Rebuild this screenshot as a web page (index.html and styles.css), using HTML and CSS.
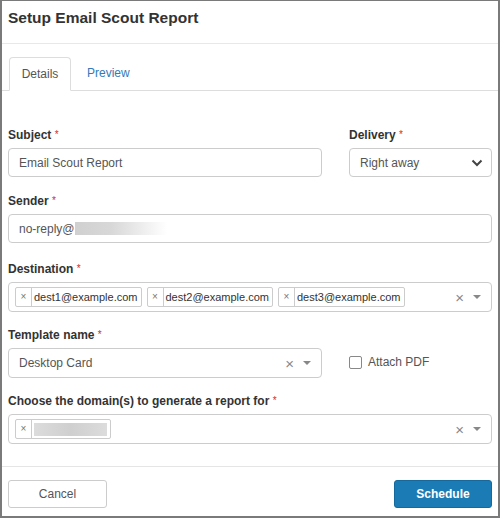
FILE: index.html
```html
<!DOCTYPE html>
<html>
<head>
<meta charset="utf-8">
<link rel="stylesheet" href="styles.css">
</head>
<body>
<div class="modal">
  <div class="header"><h1 class="title">Setup Email Scout Report</h1></div>
  <div class="tabs">
    <div class="tab active">Details</div>
    <div class="tab link">Preview</div>
  </div>
  <div class="form">
    <div class="row two">
      <div class="group">
        <label class="label">Subject <span class="req">*</span></label>
        <div class="input">Email Scout Report</div>
      </div>
      <div class="group">
        <label class="label">Delivery <span class="req">*</span></label>
        <div class="input select">
          <span>Right away</span>
          <svg class="chev" width="12" height="8" viewBox="0 0 12 8"><path d="M1.5 1.5 L6 6 L10.5 1.5" fill="none" stroke="#444" stroke-width="2"/></svg>
        </div>
      </div>
    </div>
    <div class="group g2">
      <label class="label">Sender <span class="req">*</span></label>
      <div class="input">no-reply@<span class="blur blur-sender"></span></div>
    </div>
    <div class="group g3">
      <label class="label">Destination <span class="req">*</span></label>
      <div class="multi">
        <div class="tags">
          <span class="tag"><span class="tx">×</span><span class="tt">dest1@example.com</span></span>
          <span class="tag"><span class="tx">×</span><span class="tt">dest2@example.com</span></span>
          <span class="tag"><span class="tx">×</span><span class="tt">dest3@example.com</span></span>
        </div>
        <span class="clear">×</span>
        <span class="caret"></span>
      </div>
    </div>
    <div class="row two g4">
      <div class="group">
        <label class="label">Template name <span class="req">*</span></label>
        <div class="multi single">
          <div class="tags"><span class="val">Desktop Card</span></div>
          <span class="clear">×</span>
          <span class="caret"></span>
        </div>
      </div>
      <div class="check-wrap">
        <span class="checkbox"></span><span class="check-label">Attach PDF</span>
      </div>
    </div>
    <div class="group g5">
      <label class="label">Choose the domain(s) to generate a report for <span class="req">*</span></label>
      <div class="multi">
        <div class="tags">
          <span class="tag"><span class="tx">×</span><span class="tt"><span class="blur blur-domain"></span></span></span>
        </div>
        <span class="clear">×</span>
        <span class="caret"></span>
      </div>
    </div>
  </div>
  <div class="footer">
    <button class="btn cancel">Cancel</button>
    <button class="btn primary">Schedule</button>
  </div>
</div>
</body>
</html>
```
FILE: styles.css
```css
* { box-sizing: border-box; }
html, body { margin: 0; padding: 0; background: #fff; }
body { font-family: "Liberation Sans", Arial, sans-serif; color: #333; }

.modal {
  width: 500px;
  height: 518px;
  border-top: 1px solid #7a7a7a;
  border-left: 2px solid #7a7a7a;
  border-right: 2px solid #7a7a7a;
  border-bottom: 2px solid #7a7a7a;
  display: flex;
  flex-direction: column;
}

.header {
  height: 43px;
  border-bottom: 1px solid #e8e8e8;
  padding: 0 6px;
  display: flex;
  align-items: center;
}
.title {
  margin: 0;
  font-size: 15.5px;
  font-weight: bold;
  color: #333;
  position: relative;
  top: -4px;
}

.tabs {
  margin-top: 13px;
  padding-left: 7px;
  display: flex;
  border-bottom: 1px solid #ddd;
  height: 34px;
}
.tab {
  font-size: 12px;
  height: 34px;
  line-height: 32px;
  padding: 0 14px;
}
.tab.active {
  border: 1px solid #ddd;
  border-bottom: 1px solid #fff;
  border-radius: 4px 4px 0 0;
  color: #555;
  background: #fff;
  width: 62px;
  padding: 0;
  text-align: center;
}
.tab.link { color: #337ab7; padding-left: 16px; }

.form {
  padding: 37px 6px 0 6px;
}
.row.two {
  display: grid;
  grid-template-columns: 314px 1fr;
  column-gap: 27px;
}
.label {
  display: block;
  font-size: 12px;
  font-weight: bold;
  line-height: 14px;
  margin-bottom: 6px;
  color: #333;
}
.req { color: #c9302c; font-weight: normal; font-size: 10px; vertical-align: top; }

.input {
  height: 29px;
  border: 1px solid #ccc;
  border-radius: 4px;
  font-size: 12px;
  color: #555;
  padding: 0 10px;
  display: flex;
  align-items: center;
}
.input.select { justify-content: space-between; padding-right: 8px; }
.chev { display: block; }

.blur { display: inline-block; }
.blur-sender {
  width: 92px;
  height: 13px;
  background: linear-gradient(to right, #d0d0d0 0%, #d8d8d8 40%, #fff 100%);
}
.blur-domain {
  width: 73px;
  height: 13px;
  background: linear-gradient(to right, #dcdcdc, #cfcfcf 50%, #dcdcdc);
}

.g2 { margin-top: 17px; }
.g3 { margin-top: 19px; }
.g4 { margin-top: 16px; }
.g5 { margin-top: 16px; }

.multi {
  height: 30px;
  border: 1px solid #ccc;
  border-radius: 4px;
  display: flex;
  align-items: center;
  padding: 0 8px 0 6px;
}
.multi .tags { flex: 1; display: flex; gap: 5px; align-items: center; }
.tag {
  display: inline-flex;
  align-items: center;
  height: 20px;
  border: 1px solid #ccc;
  border-radius: 2px;
  font-size: 11px;
  color: #333;
  background: #fff;
}
.tx {
  width: 16px;
  height: 18px;
  border-right: 1px solid #ccc;
  text-align: center;
  line-height: 18px;
  font-size: 10px;
  color: #777;
}
.tt { padding: 0 3px 0 2px; display: inline-flex; align-items: center; }
.clear { color: #888; font-size: 15px; margin-right: 9px; line-height: 1; }
.caret {
  width: 0; height: 0;
  border-left: 4px solid transparent;
  border-right: 4px solid transparent;
  border-top: 4px solid #888;
  margin-right: 2px;
}
.single { padding-left: 10px; }
.single .val { font-size: 12px; color: #555; }

.check-wrap {
  display: flex;
  align-items: center;
  align-self: end;
  height: 30px;
  padding-bottom: 2px;
}
.checkbox {
  width: 13px; height: 13px;
  border: 1px solid #888;
  border-radius: 2px;
  margin-right: 6px;
}
.check-label { font-size: 12px; color: #555; }

.footer {
  margin-top: 22px;
  border-top: 1px solid #e5e5e5;
  padding: 13px 6px 0 6px;
  display: flex;
  justify-content: space-between;
}
.btn {
  height: 28px;
  font-family: "Liberation Sans", Arial, sans-serif;
  font-size: 12px;
  border-radius: 3px;
  cursor: pointer;
}
.cancel {
  width: 99px;
  background: #fff;
  border: 1px solid #ccc;
  color: #555;
}
.primary {
  width: 98px;
  background: #1b7bb5;
  border: 1px solid #16699c;
  color: #fff;
  font-weight: bold;
}
```
